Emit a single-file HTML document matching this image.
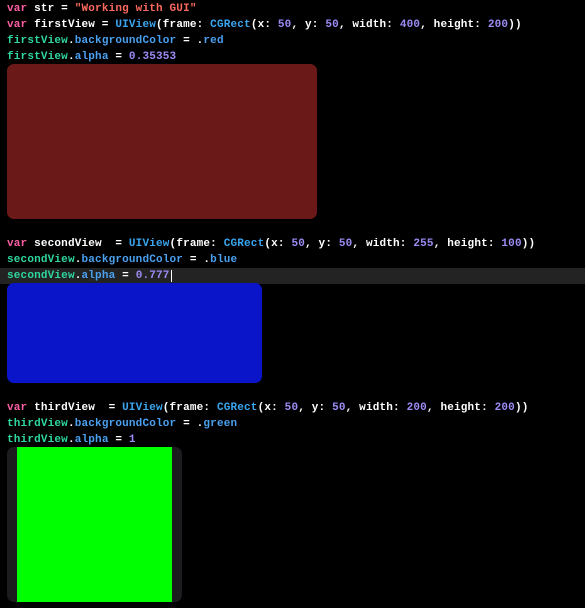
<!DOCTYPE html>
<html><head><meta charset="utf-8"><style>
html,body{margin:0;padding:0;background:#000;width:585px;height:608px;overflow:hidden;position:relative}
.l{position:absolute;left:7px;font-family:"Liberation Mono","DejaVu Sans Mono",monospace;font-size:11px;letter-spacing:0.17px;font-weight:bold;color:#fff;white-space:pre;line-height:16px;height:16px}
.k{color:#fc5fa3}.s{color:#fc6a5d}.t{color:#3aa6f0}.p{color:#2fd6a0}.m{color:#4aa0f0}.n{color:#9c8cf5}
.b{position:absolute}
</style></head><body>
<div class="l" style="top:1px"><span class="k">var</span> str = <span class="s">"Working with GUI"</span></div>
<div class="l" style="top:17px"><span class="k">var</span> firstView = <span class="t">UIView</span>(frame: <span class="t">CGRect</span>(x: <span class="n">50</span>, y: <span class="n">50</span>, width: <span class="n">400</span>, height: <span class="n">200</span>))</div>
<div class="l" style="top:33px"><span class="p">firstView</span>.<span class="m">backgroundColor</span> = .<span class="m">red</span></div>
<div class="l" style="top:49px"><span class="p">firstView</span>.<span class="m">alpha</span> = <span class="n">0.35353</span></div>
<div class="b" style="left:7px;top:64px;width:310px;height:155px;background:#6b1818;border-radius:7px"></div>

<div class="l" style="top:236px"><span class="k">var</span> secondView  = <span class="t">UIView</span>(frame: <span class="t">CGRect</span>(x: <span class="n">50</span>, y: <span class="n">50</span>, width: <span class="n">255</span>, height: <span class="n">100</span>))</div>
<div class="l" style="top:252px"><span class="p">secondView</span>.<span class="m">backgroundColor</span> = .<span class="m">blue</span></div>
<div class="b" style="left:0;top:268px;width:585px;height:16px;background:#232323"></div>
<div class="l" style="top:268px"><span class="p">secondView</span>.<span class="m">alpha</span> = <span class="n">0.777</span><span style="border-left:1px solid #fff;margin-left:1px"></span></div>
<div class="b" style="left:7px;top:283px;width:255px;height:100px;background:#0a14c8;border-radius:7px"></div>

<div class="l" style="top:400px"><span class="k">var</span> thirdView  = <span class="t">UIView</span>(frame: <span class="t">CGRect</span>(x: <span class="n">50</span>, y: <span class="n">50</span>, width: <span class="n">200</span>, height: <span class="n">200</span>))</div>
<div class="l" style="top:416px"><span class="p">thirdView</span>.<span class="m">backgroundColor</span> = .<span class="m">green</span></div>
<div class="l" style="top:432px"><span class="p">thirdView</span>.<span class="m">alpha</span> = <span class="n">1</span></div>
<div class="b" style="left:7px;top:447px;width:175px;height:155px;background:#1c1c1e;border-radius:7px"></div>
<div class="b" style="left:17px;top:447px;width:155px;height:155px;background:#00ff00"></div>
</body></html>
